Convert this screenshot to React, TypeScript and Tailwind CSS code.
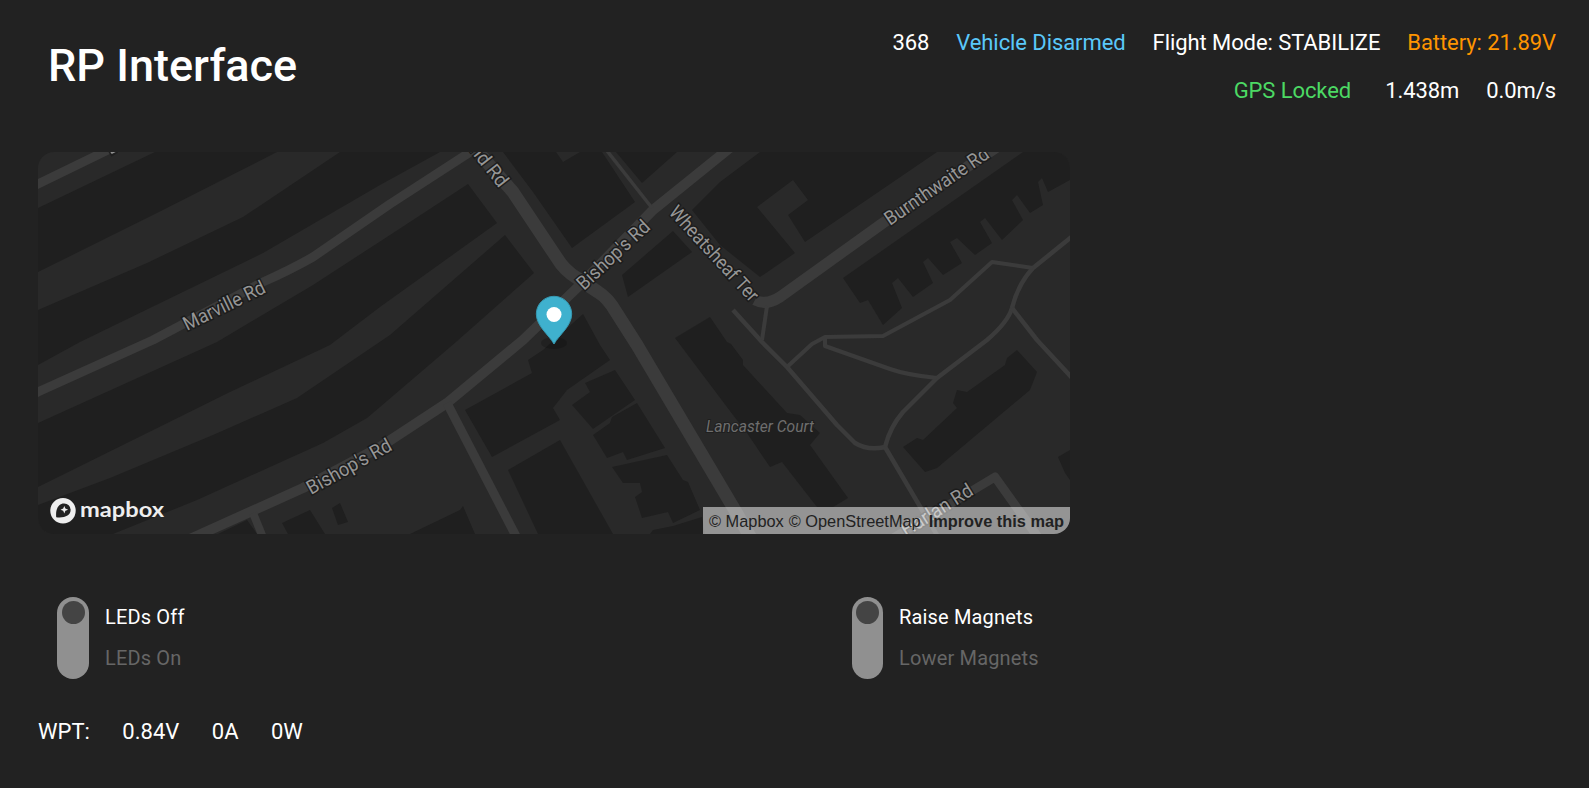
const buildings = [
  "38,208 155,152 277,152 163,210 38,272",
  "38,310 147,263 243,217 340,152 440,152 380,185 263,253 80,342 38,365",
  "38,423 217,342 313,285 390,235 468,184 497,223 380,307 330,345 230,392 38,487",
  "38,505 110,478 213,435 297,398 390,335 505,235 534,273 456,342 380,407 367,418 323,443 197,500 113,534 38,534",
  "218,534 247,520 257,534",
  "282,523 310,510 325,534 288,534",
  "332,508 340,503 348,522 338,525",
  "410,534 460,510 463,506 475,534",
  "465,410 532,373 528,360 543,350 583,314 600,345 610,360 567,390 553,408 560,420 492,457",
  "572,405 590,392 585,383 615,370 635,400 593,429",
  "593,435 610,423 612,417 637,403 665,448 627,460 623,452 607,458",
  "612,467 667,455 683,480 688,482 700,510 673,523 668,512 642,518 635,497 642,492 640,483 623,483",
  "650,534 653,530 673,526 702,517 705,534",
  "508,470 560,440 613,534 538,534",
  "503,152 556,152 563,162 580,152 602,152 635,202 572,248 533,192",
  "616,152 677,152 642,183",
  "622,275 673,231 692,252 628,297",
  "692,210 720,182 760,152 937,152 805,242 788,215 808,200 793,180 757,207 795,253 760,277 720,245",
  "843,278 1023,152 1070,152 1070,180 1048,192 1042,178 1038,182 1043,205 1030,213 1017,195 1012,200 1023,220 1002,240 985,218 980,222 992,243 975,255 957,238 950,242 962,263 943,275 928,258 923,262 933,283 913,297 898,278 892,283 902,308 883,325 868,300 860,303",
  "675,338 710,317 727,342 731,344 743,360 743,365 787,413 800,415 820,433 810,445 848,498 833,507 817,507 782,462 770,467 747,433 733,415",
  "903,447 917,438 923,440 957,408 953,403 957,390 967,392 1005,365 1007,358 1017,350 1037,372 1030,390 937,468 925,472",
  "1070,450 1058,457 1065,473 1070,480",
];

const roads = [
  { d: "M30 188 L112 148", w: 9 },
  { d: "M30 396 L38 392 L153 340 L263 282 Q290 270 313 257 L390 204 L478 147", w: 9 },
  { d: "M190 539 L303 488 L380 447 L447 403 L523 340 L580 285 L653 210 L731 147", w: 10 },
  { d: "M447 403 L518 540", w: 9 },
  { d: "M253 513 L264 540", w: 8 },
  { d: "M472 145 L513 192 L557 258 Q564 270 577 278 L598 292 Q608 298 616 312 L637 345 L733 507 L752 540", w: 13 },
  { d: "M604 147 L652 208", w: 3.5 },
  { d: "M755 300 Q766 306 780 297 L883 223 L1000 145", w: 11 },
  { d: "M733 310 L762 342 L787 367 L837 425 L855 443 Q868 451 885 447 L922 510 L940 540", w: 4.5 },
  { d: "M885 447 Q890 427 903 412 L937 378 L987 340 Q1008 322 1012 308 Q1018 284 1033 268 L1074 235", w: 4.5 },
  { d: "M1033 268 L992 262 L950 300 L883 336 L825 337 L812 344 L787 367", w: 4 },
  { d: "M1012 308 L1037 340 L1074 380", w: 4.5 },
  { d: "M825 337 L825 346 L890 369 Q907 375 937 378", w: 4 },
  { d: "M767 306 L762 340", w: 4 },
  { d: "M890 540 L970 492 L995 477 L1040 540", w: 9 },
];

const labels = [
  { t: "Marville Rd", x: 187, y: 331, r: -26, l: 89 },
  { t: "Bishop's Rd", x: 311, y: 495, r: -29, l: 94 },
  { t: "Bishop's Rd", x: 584, y: 291, r: -43, l: 92 },
  { t: "Wheatsheaf Ter", x: 668, y: 213, r: 47.5, l: 122 },
  { t: "Burnthwaite Rd", x: 890, y: 226, r: -34.5, l: 122 },
  { t: "Harlan Rd", x: 906, y: 537, r: -32, l: 81 },
  { t: "nd Rd", x: 469, y: 150, r: 52, l: 49 },
];

function MapView() {
  return (
    <div className="relative h-[382px] w-[1032px] overflow-hidden rounded-2xl bg-[#292929]">
      <svg className="block h-full w-full" viewBox="38 152 1032 382">
        {buildings.map((p) => (
          <polygon key={p} points={p} fill="#1f1f1f" />
        ))}
        {roads.map((r) => (
          <path key={r.d} d={r.d} fill="none" stroke="#3b3b3b" strokeWidth={r.w} strokeLinejoin="round" />
        ))}
        <path d="M109 149 l3 5 5 -3" fill="none" stroke="#1f1f1f" strokeWidth="4" />
        <path d="M109 149 l3 4 4 -2" fill="none" stroke="#929292" strokeWidth="1.500" />
        {labels.map((l) => (
          <text
            key={l.x}
            x={l.x}
            y={l.y}
            transform={`rotate(${l.r} ${l.x} ${l.y})`}
            textLength={l.l}
            lengthAdjust="spacingAndGlyphs"
            className="fill-[#969696] stroke-[#1c1c1c] font-['Roboto',sans-serif] text-[19.5px]"
            strokeWidth={3}
            paintOrder="stroke"
          >
            {l.t}
          </text>
        ))}
        <text
          x={706}
          y={431.5}
          textLength={108}
          lengthAdjust="spacingAndGlyphs"
          className="fill-[#6e6e6e] stroke-[#1f1f1f] font-['Roboto',sans-serif] text-[17px] italic"
          strokeWidth={2}
          paintOrder="stroke"
        >
          Lancaster Court
        </text>
        <ellipse cx="554" cy="343" rx="13" ry="6" fill="#000" opacity=".18" />
        <path d="M554 344 C549 335 536.300 326 536.300 314 A17.700 17.700 0 0 1 571.700 314 C571.700 326 559 335 554 344Z" fill="#3fb1ce" stroke="#3698b1" strokeWidth="1" />
        <circle cx="554" cy="314.500" r="7.500" fill="#fff" />
      </svg>
      <div className="absolute bottom-2.5 left-3 flex h-[26px] items-center gap-[4px]">
        <svg className="size-[26px]" viewBox="0 0 26 26">
          <circle cx="13" cy="12.700" r="12.700" fill="#eee" />
          <path d="M6.200 19.200 C5.400 11 8.500 5.400 14 5.400 A6.400 6.400 0 0 1 20.600 12 C20.600 17.500 14.500 20.200 6.200 19.200Z" fill="#222" />
          <path d="M14.300 7.900 l1.100 2.700 2.700 1.100 -2.700 1.100 -1.100 2.700 -1.100 -2.700 -2.700 -1.100 2.700 -1.100Z" fill="#eee" />
        </svg>
        <svg className="h-[26px] w-[86px]" viewBox="0 0 86 26">
          <text x="0" y="19" textLength="84" lengthAdjust="spacingAndGlyphs" className="fill-[#eee] font-['Lato',sans-serif] text-[20.5px] font-bold">
            mapbox
          </text>
        </svg>
      </div>
      <div className="absolute right-0 bottom-0 flex h-[27px] w-[367px] items-center justify-between bg-white/50 px-1.5 pt-px font-['Liberation_Sans',sans-serif] text-[16.35px] whitespace-nowrap text-[#222]">
        <span>© Mapbox</span>
        <span>© OpenStreetMap</span>
        <b className="pl-[3px]">Improve this map</b>
      </div>
    </div>
  );
}

function Toggle({ on, off, width }: { on: string; off: string; width: string }) {
  return (
    <div className="flex">
      <div className={`${width} flex h-[82px] justify-center rounded-full bg-[#909090] pt-1`}>
        <div className="size-[23px] rounded-full bg-[#444]" />
      </div>
      <div className="flex flex-col pl-4 text-[20px] leading-[41px] tracking-[0.16px]">
        <span>{on}</span>
        <span className="text-[#666]">{off}</span>
      </div>
    </div>
  );
}

export default function App() {
  return (
    <div className="flex h-[788px] w-[1589px] flex-col overflow-hidden bg-[#222] font-['Roboto',sans-serif] text-white">
      <header className="flex h-[152px] justify-between pr-[33px] pl-12">
        <h1 className="pt-[34px] text-[45px] leading-[64px] font-medium">RP Interface</h1>
        <div className="flex flex-col items-end pt-[19px] text-[22px] leading-[48px] tracking-[-0.08px]">
          <div className="flex gap-[27px]">
            <span>368</span>
            <span className="text-[#5ac8fa]">Vehicle Disarmed</span>
            <span>Flight Mode: STABILIZE</span>
            <span className="text-[#ff9500]">Battery: 21.89V</span>
          </div>
          <div className="flex gap-[27px]">
            <span className="pr-[7px] text-[#4cd964]">GPS Locked</span>
            <span>1.438m</span>
            <span>0.0m/s</span>
          </div>
        </div>
      </header>
      <main className="pl-[38px]">
        <MapView />
        <section className="flex pt-[63px] pl-[19px]">
          <div className="w-[795px]">
            <Toggle on="LEDs Off" off="LEDs On" width="w-8" />
          </div>
          <Toggle on="Raise Magnets" off="Lower Magnets" width="w-[31px]" />
        </section>
        <footer className="flex gap-[32.5px] pt-[37px] text-[22px] leading-8">
          <span>WPT:</span>
          <span>0.84V</span>
          <span>0A</span>
          <span>0W</span>
        </footer>
      </main>
    </div>
  );
}
